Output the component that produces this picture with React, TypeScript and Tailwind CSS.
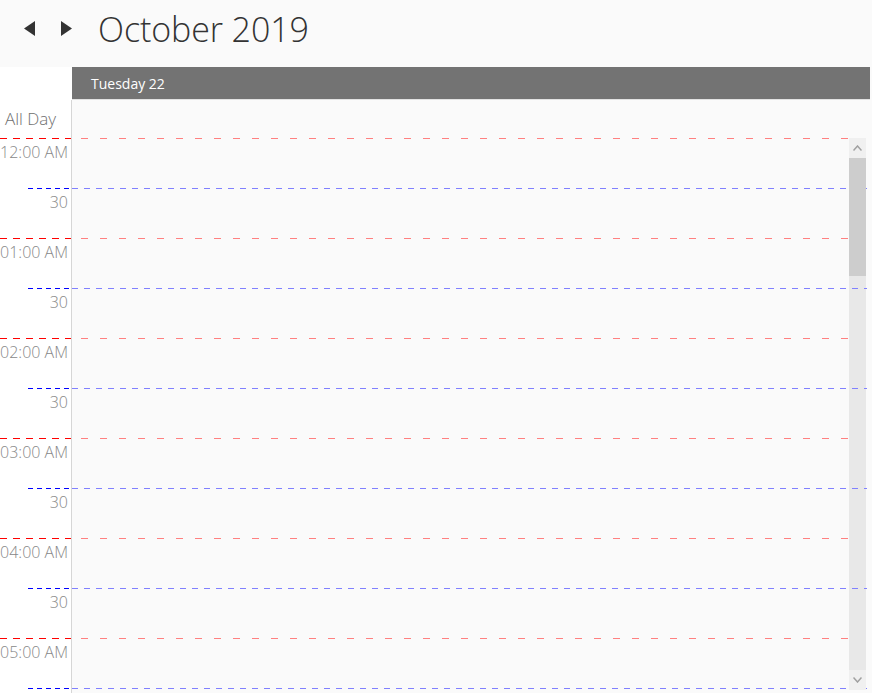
import React from 'react';

const font = { fontFamily: '"Open Sans", "Noto Sans", sans-serif' };

const slots = [
  { label: '12:00 AM', hour: true },
  { label: '30', hour: false },
  { label: '01:00 AM', hour: true },
  { label: '30', hour: false },
  { label: '02:00 AM', hour: true },
  { label: '30', hour: false },
  { label: '03:00 AM', hour: true },
  { label: '30', hour: false },
  { label: '04:00 AM', hour: true },
  { label: '30', hour: false },
  { label: '05:00 AM', hour: true },
  { label: '', hour: false },
];

function Slot({ label, hour }: { label: string; hour: boolean }) {
  return (
    <div className="flex h-[50px] shrink-0">
      <div className="flex w-[72px] shrink-0 flex-col border-r border-[#d6d6d6] bg-white">
        {hour ? (
          <div className="h-px bg-[repeating-linear-gradient(90deg,#ff0000_0_7px,transparent_7px_13px)]" />
        ) : (
          <div className="ml-[28px] h-px bg-[repeating-linear-gradient(90deg,#0000ff_0_5px,transparent_5px_9px)]" />
        )}
        <div className="pr-[3px] pt-[2px] text-right text-[16px] leading-[22px] font-light text-[#888]">
          {label}
        </div>
      </div>
      <div className="flex-1">
        {hour ? (
          <div className="mr-[24px] h-px bg-[repeating-linear-gradient(90deg,transparent_0_9px,#ff8080_9px_16px,transparent_16px_19px)]" />
        ) : (
          <div className="mr-[5px] h-px bg-[repeating-linear-gradient(90deg,#8080ff_0_6px,transparent_6px_12px)]" />
        )}
      </div>
    </div>
  );
}

export default function App() {
  return (
    <div className="flex h-[693px] w-[872px] flex-col overflow-hidden bg-[#fafafa]" style={font}>
      <div className="flex h-[67px] shrink-0 items-center pb-[10px]">
        <button className="ml-[23px] flex h-[20px] w-[12px] items-center justify-center">
          <svg width="11" height="15" viewBox="0 0 11 15">
            <polygon points="11,0 11,15 0,7.5" fill="#333" />
          </svg>
        </button>
        <button className="ml-[25px] flex h-[20px] w-[12px] items-center justify-center">
          <svg width="11" height="15" viewBox="0 0 11 15">
            <polygon points="0,0 0,15 11,7.5" fill="#333" />
          </svg>
        </button>
        <h1 className="ml-[26px] text-[34px] leading-none font-light tracking-[-0.1px] text-[#333]">October 2019</h1>
      </div>

      <div className="flex shrink-0">
        <div className="w-[72px] shrink-0 bg-white" />
        <div className="mr-[2px] flex h-[33px] flex-1 items-center border-b border-[#e2e2e2] bg-[#737373] pl-[19px] text-[14px] text-white">
          Tuesday 22
        </div>
      </div>

      <div className="flex h-[38px] shrink-0">
        <div className="flex w-[72px] shrink-0 items-center border-r border-[#d6d6d6] bg-white pl-[5px] text-[17px] font-light text-[#707070]">
          All Day
        </div>
        <div className="flex-1" />
      </div>

      <div className="relative flex-1 overflow-hidden">
        <div className="absolute top-0 left-[849px] h-[552px] w-[17px] bg-[#e8e8e8]" />
        <div className="relative z-10 flex flex-col">
          {slots.map((s, i) => (
            <Slot key={i} label={s.label} hour={s.hour} />
          ))}
        </div>
        <div className="absolute top-0 left-[849px] z-20 flex h-[552px] w-[17px] flex-col">
          <div className="flex h-[20px] items-center justify-center bg-[#f0f0f0]">
            <svg width="9" height="6" viewBox="0 0 9 6">
              <polyline points="0.5,5.5 4.5,1 8.5,5.5" fill="none" stroke="#a0a0a0" strokeWidth="1.5" />
            </svg>
          </div>
          <div className="h-[118px] bg-[#cdcdcd]" />
          <div className="flex-1" />
          <div className="flex h-[20px] items-center justify-center bg-[#f0f0f0]">
            <svg width="9" height="6" viewBox="0 0 9 6">
              <polyline points="0.5,0.5 4.5,5 8.5,0.5" fill="none" stroke="#a0a0a0" strokeWidth="1.5" />
            </svg>
          </div>
        </div>
      </div>
    </div>
  );
}
